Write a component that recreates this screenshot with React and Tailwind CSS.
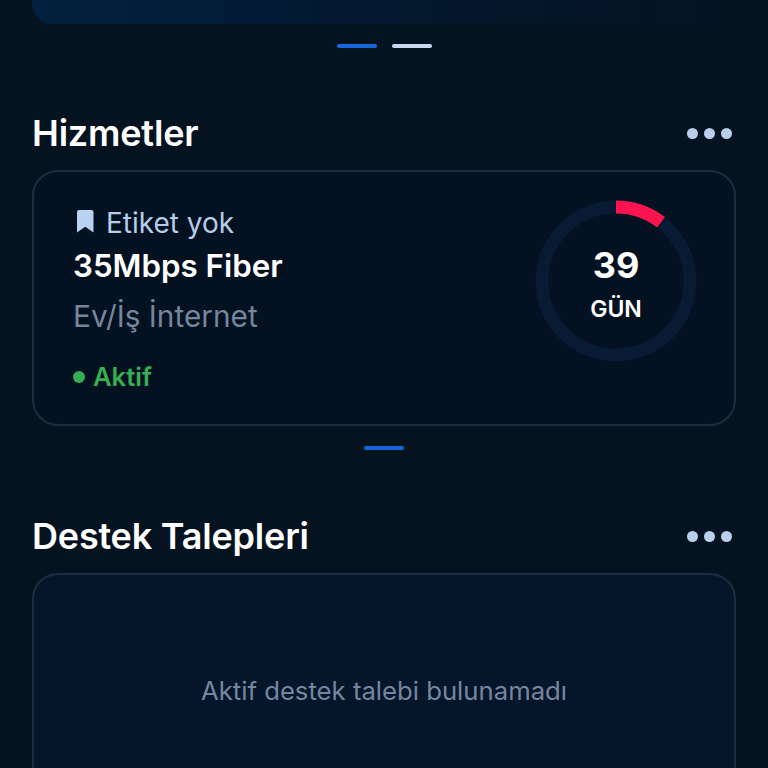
import React from "react";

const font = { fontFamily: "Inter, 'Liberation Sans', sans-serif" };

function Dots() {
  return (
    <div className="flex items-center gap-[6px]">
      <span className="h-[11px] w-[11px] rounded-full bg-[#b9cfec]" />
      <span className="h-[11px] w-[11px] rounded-full bg-[#b9cfec]" />
      <span className="h-[11px] w-[11px] rounded-full bg-[#b9cfec]" />
    </div>
  );
}

function SectionHeader({ title }) {
  return (
    <div className="flex h-[40px] items-center justify-between pr-[4px]">
      <h2 className="text-[36px] leading-[40px] font-semibold tracking-[-0.2px] text-white">{title}</h2>
      <Dots />
    </div>
  );
}

function Ring() {
  const r = 74;
  const c = 2 * Math.PI * r;
  return (
    <div className="relative mt-[28px] h-[162px] w-[162px] self-start">
      <svg width="162" height="162" viewBox="0 0 162 162" className="-rotate-90">
        <circle cx="81" cy="81" r={r} fill="none" stroke="#081a34" strokeWidth="13" />
        <circle cx="81" cy="81" r={r} fill="none" stroke="#fb1550" strokeWidth="13" strokeDasharray={`${c * 0.104} ${c}`} />
      </svg>
      <div className="absolute inset-0 flex flex-col items-center pt-[45px] text-white">
        <span className="text-[36px] leading-[40px] font-bold">39</span>
        <span className="mt-[10px] text-[23px] leading-[28px] font-semibold">GÜN</span>
      </div>
    </div>
  );
}

export default function App() {
  return (
    <div style={font} className="h-[768px] w-[768px] overflow-hidden bg-[#051220] px-[32px]">
      <div className="h-[24px] rounded-b-[20px] bg-gradient-to-r from-[#02203f] via-[#03182f] to-[#051220]" />

      <div className="mt-[20px] flex justify-center gap-[15px]">
        <span className="h-[4px] w-[40px] rounded-full bg-[#1568dc]" />
        <span className="h-[4px] w-[40px] rounded-full bg-[#c8d9ef]" />
      </div>

      <div className="mt-[65px]">
        <SectionHeader title="Hizmetler" />
      </div>

      <div className="mt-[17px] flex h-[256px] items-center justify-between rounded-[26px] border-2 border-[#1f2c3d] bg-[#041120] pr-[37px] pl-[39px]">
        <div className="flex flex-col pt-[2px]">
          <div className="flex h-[36px] items-center gap-[10px] pt-[3px]">
            <svg width="24" height="24" viewBox="0 0 24 24" className="-ml-[1px] -mt-[3px]">
              <path d="M5 3A2 2 0 0 1 7 1h12.5a2 2 0 0 1 2 2V23.5l-8.2-5.8-8.3 5.8Z" fill="#b9d2f1" />
            </svg>
            <span className="text-[28px] leading-[36px] text-[#b6cde9]">Etiket yok</span>
          </div>
          <span className="mt-[9px] text-[31.3px] leading-[36px] font-semibold text-white">35Mbps Fiber</span>
          <span className="mt-[13px] text-[29.8px] leading-[38px] text-[#74879d]">Ev/İş İnternet</span>
          <div className="mt-[24px] flex h-[36px] items-center gap-[8px]">
            <span className="h-[12px] w-[12px] rounded-full bg-[#38ae54]" />
            <span className="text-[25.6px] leading-[36px] font-semibold text-[#38ae54]">Aktif</span>
          </div>
        </div>
        <Ring />
      </div>

      <div className="mt-[20px] flex justify-center">
        <span className="h-[4px] w-[40px] rounded-full bg-[#1568dc]" />
      </div>

      <div className="mt-[66px]">
        <SectionHeader title="Destek Talepleri" />
      </div>

      <div className="mt-[17px] flex h-[236px] items-center justify-center rounded-[26px] border-2 border-[#1f2c3d] bg-[#05152a]">
        <span className="text-[25.7px] leading-[36px] text-[#74879f]">Aktif destek talebi bulunamadı</span>
      </div>
    </div>
  );
}
